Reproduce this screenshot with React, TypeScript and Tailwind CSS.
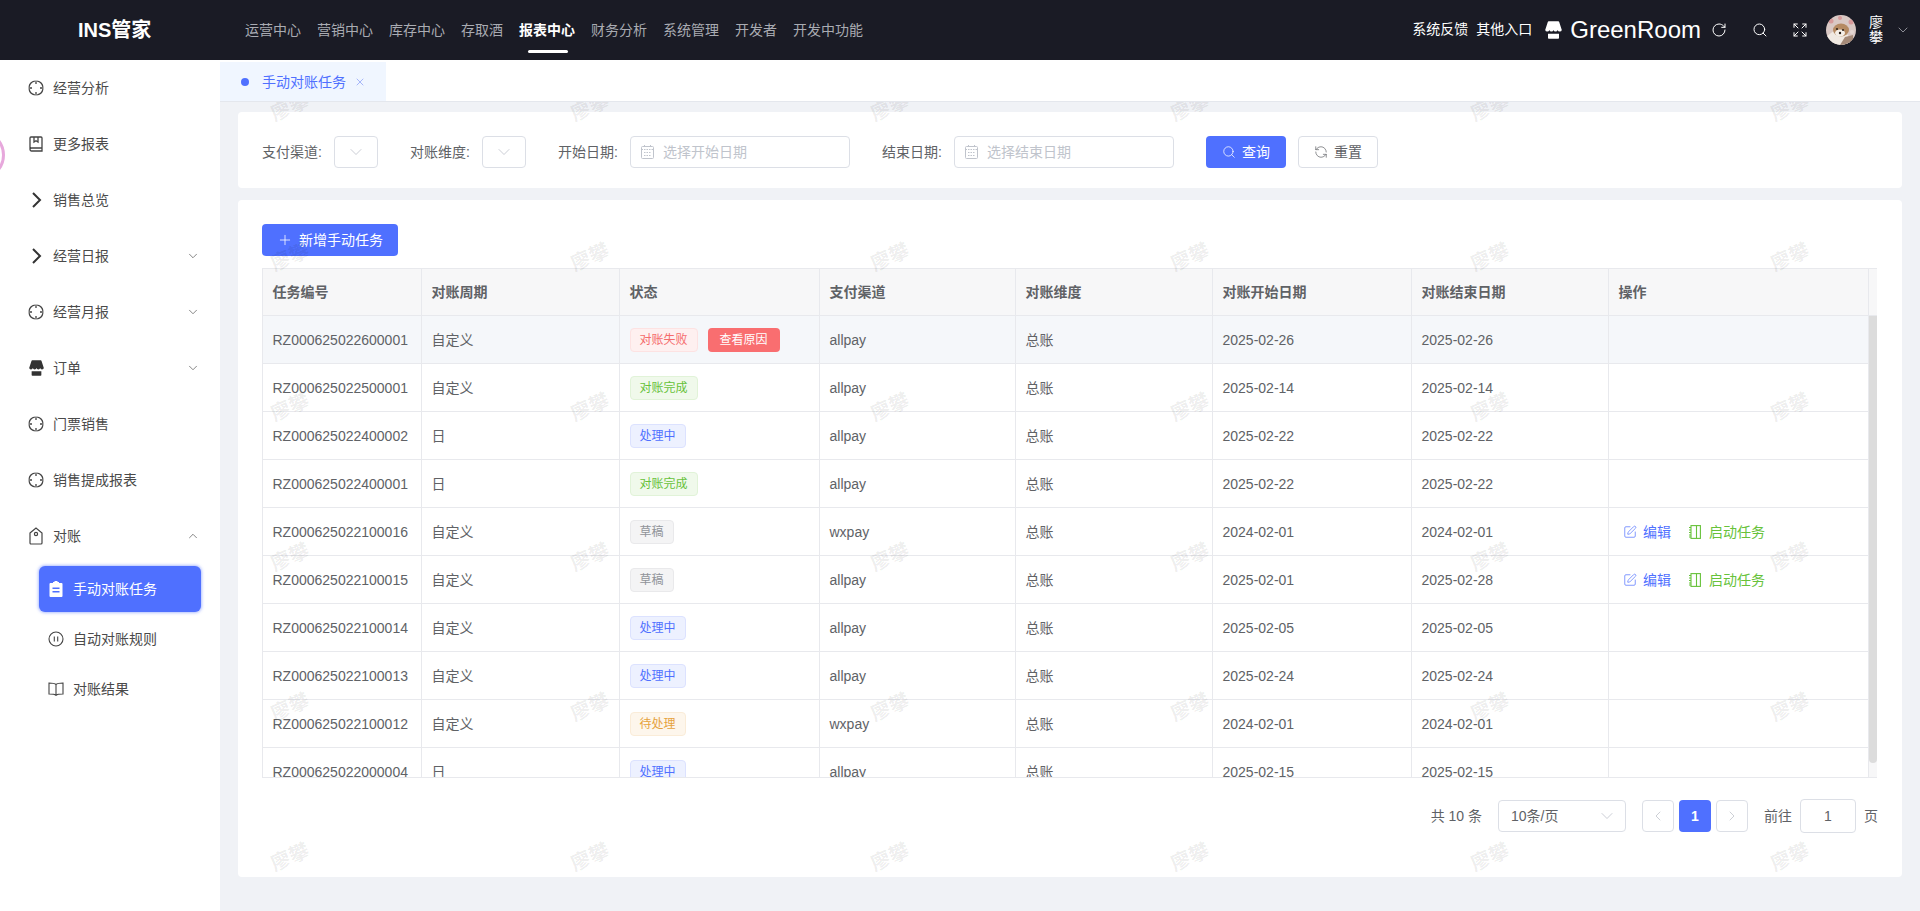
import { ChevronDown, ChevronLeft, ChevronRight, ChevronUp, Expand, Plus, RefreshCcw, RotateCw, Search, SquarePen, X } from "lucide-react";

const navItems = ["运营中心", "营销中心", "库存中心", "存取酒", "报表中心", "财务分析", "系统管理", "开发者", "开发中功能"];

const CrossCircle = () => (
  <svg width="16" height="16" viewBox="0 0 16 16" fill="none" stroke="#444" strokeWidth="1.300">
    <path d="M6.800 1.100A7 7 0 0 0 1.100 6.800M9.200 1.100a7 7 0 0 1 5.700 5.700M1.100 9.200a7 7 0 0 0 5.700 5.700M14.900 9.200a7 7 0 0 1-5.700 5.700" />
    <path d="M8 0.500v3.500M8 12v3.500M0.500 8H4M12 8h3.500" />
  </svg>
);

const BookMark = () => (
  <svg width="14" height="16" viewBox="0 0 14 16" fill="none" stroke="#444" strokeWidth="1.300">
    <path d="M1 13V2a1 1 0 0 1 1-1h10a1 1 0 0 1 1 1v13H2.500A1.500 1.500 0 0 1 1 13.500 1.500 1.500 0 0 1 2.500 12H13" />
    <path d="M5 1v5l2-1.300L9 6V1" />
  </svg>
);

const BigChevron = () => (
  <svg width="16" height="16" viewBox="0 0 16 16" fill="none" stroke="#333" strokeWidth="2">
    <path d="M5 1l7 7-7 7" />
  </svg>
);

const StoreShape = ({ color, size }: { color: string; size: number }) => (
  <svg width={size} height={size + 1} viewBox="0 0 17 18" fill={color}>
    <path d="M2.800 1Q3 .3 3.700 .3H13.300Q14 .3 14.200 1L16.800 9A2.100 1.900 0 0 1 12.650 9A2.100 1.900 0 0 1 8.500 9A2.100 1.900 0 0 1 4.350 9A2.100 1.900 0 0 1 .2 9z" />
    <path d="M3 12.800h11V17a.8.8 0 0 1-.8.8H3.800A.8.8 0 0 1 3 17z" />
  </svg>
);

const TagIcon = () => (
  <svg width="14" height="18" viewBox="0 0 14 18" fill="none" stroke="#444" strokeWidth="1.200">
    <path d="M1 6l6-5 6 5v10a1 1 0 0 1-1 1H2a1 1 0 0 1-1-1z" />
    <circle cx="7" cy="7" r="1.600" />
  </svg>
);

const PauseCircle = () => (
  <svg width="16" height="16" viewBox="0 0 16 16" fill="none" stroke="#444" strokeWidth="1.100">
    <circle cx="8" cy="8" r="7" />
    <path d="M6.300 5.500v5M9.700 5.500v5" />
  </svg>
);

const OpenBook = () => (
  <svg width="16" height="14" viewBox="0 0 16 14" fill="none" stroke="#444" strokeWidth="1.100">
    <path d="M8 2.500C7 1.500 5 1 1 1v11c4 0 6 .3 7 1.300 1-1 3-1.300 7-1.300V1c-4 0-6 .5-7 1.500zM8 2.500v10.800" />
  </svg>
);

const ClipboardFill = () => (
  <svg width="14" height="16" viewBox="0 0 14 16">
    <path fill="#fff" d="M1.500 2H4V1h1.500V0h3v1H10v1h2.500a1 1 0 0 1 1 1v12a1 1 0 0 1-1 1h-11a1 1 0 0 1-1-1V3a1 1 0 0 1 1-1z" />
    <path fill="#4f70ff" d="M3.500 6.500h7v1.400h-7zM3.500 10h7v1.400h-7z" />
  </svg>
);

const NotebookIcon = () => (
  <svg width="12" height="14" viewBox="0 0 12 14" fill="none" stroke="#67c23a" strokeWidth="1.100">
    <rect x="2" y="0.600" width="9.400" height="12.800" />
    <path d="M7.500 .6v12.800M0 2.500h2M0 5h2M0 7.500h2M0 10h2M0 12h2" />
  </svg>
);

const Avatar = () => (
  <svg width="30" height="30" viewBox="0 0 30 30" className="rounded-full">
    <rect width="30" height="30" fill="#d9c8c4" />
    <circle cx="5" cy="6" r="2.500" fill="#d79a9a" />
    <circle cx="14" cy="3" r="2" fill="#d79a9a" />
    <circle cx="25" cy="7" r="2.500" fill="#d79a9a" />
    <circle cx="26" cy="17" r="2" fill="#e4d6d2" />
    <path d="M0 22l10-8 12 6 3 10H0z" fill="#f0e9e2" />
    <ellipse cx="15" cy="15" rx="8" ry="6.500" fill="#b58a62" />
    <ellipse cx="14" cy="18" rx="5" ry="3.500" fill="#f5efe8" />
    <circle cx="11" cy="14" r="1" fill="#2b2118" />
    <circle cx="17" cy="15" r="1" fill="#2b2118" />
    <circle cx="14" cy="18" r="1.200" fill="#2b2118" />
    <path d="M19 22l8-2v10H14z" fill="#a58a78" />
  </svg>
);

const sideItems = [
  { label: "经营分析", icon: <CrossCircle /> },
  { label: "更多报表", icon: <BookMark /> },
  { label: "销售总览", icon: <BigChevron /> },
  { label: "经营日报", icon: <BigChevron />, arrow: "down" },
  { label: "经营月报", icon: <CrossCircle />, arrow: "down" },
  { label: "订单", icon: <StoreShape color="#333" size={15} />, arrow: "down" },
  { label: "门票销售", icon: <CrossCircle /> },
  { label: "销售提成报表", icon: <CrossCircle /> },
  { label: "对账", icon: <TagIcon />, arrow: "up" },
];

const tagStyles: Record<string, string> = {
  对账失败: "bg-[#fef0f0] border-[#fde2e2] text-[#f56c6c]",
  对账完成: "bg-[#f0f9eb] border-[#e1f3d8] text-[#67c23a]",
  处理中: "bg-[#edf1ff] border-[#dce2ff] text-[#4f70ff]",
  草稿: "bg-[#f4f4f5] border-[#e9e9eb] text-[#909399]",
  待处理: "bg-[#fdf6ec] border-[#faecd8] text-[#e6a23c]",
};

const rows = [
  ["RZ000625022600001", "自定义", "对账失败", "allpay", "总账", "2025-02-26", "2025-02-26"],
  ["RZ000625022500001", "自定义", "对账完成", "allpay", "总账", "2025-02-14", "2025-02-14"],
  ["RZ000625022400002", "日", "处理中", "allpay", "总账", "2025-02-22", "2025-02-22"],
  ["RZ000625022400001", "日", "对账完成", "allpay", "总账", "2025-02-22", "2025-02-22"],
  ["RZ000625022100016", "自定义", "草稿", "wxpay", "总账", "2024-02-01", "2024-02-01"],
  ["RZ000625022100015", "自定义", "草稿", "allpay", "总账", "2025-02-01", "2025-02-28"],
  ["RZ000625022100014", "自定义", "处理中", "allpay", "总账", "2025-02-05", "2025-02-05"],
  ["RZ000625022100013", "自定义", "处理中", "allpay", "总账", "2025-02-24", "2025-02-24"],
  ["RZ000625022100012", "自定义", "待处理", "wxpay", "总账", "2024-02-01", "2024-02-01"],
  ["RZ000625022000004", "日", "处理中", "allpay", "总账", "2025-02-15", "2025-02-15"],
];

const columns = [
  { title: "任务编号", width: "w-[159px]" },
  { title: "对账周期", width: "w-[198px]" },
  { title: "状态", width: "w-[200px]" },
  { title: "支付渠道", width: "w-[196px]" },
  { title: "对账维度", width: "w-[197px]" },
  { title: "对账开始日期", width: "w-[199px]" },
  { title: "对账结束日期", width: "w-[197px]" },
  { title: "操作", width: "w-[260px]" },
];

const SelectBox = () => (
  <div className="w-11 h-8 bg-white border border-[#dcdfe6] rounded flex items-center justify-center">
    <ChevronDown className="w-5 h-5 text-[#c0c4cc]" strokeWidth={1} />
  </div>
);

const DateBox = ({ placeholder }: { placeholder: string }) => (
  <div className="w-[220px] h-8 bg-white border border-[#dcdfe6] rounded flex items-center pl-[10px] gap-[9px]">
    <svg width="13" height="14" viewBox="0 0 13 14" fill="none" stroke="#c0c4cc" strokeWidth="1">
      <rect x="0.500" y="1.500" width="12" height="12" rx="1" />
      <path d="M0.500 4.500h12M3.500 0v2.500M9.500 0v2.500M3 7.500h7M3 10.500h7" strokeDasharray="1.500 1" />
    </svg>
    <span className="text-sm text-[#c0c4cc]">{placeholder}</span>
  </div>
);

const Field = ({ label, children }: { label: string; children: React.ReactNode }) => (
  <div className="flex items-center gap-3">
    <span className="w-[60px] text-sm text-[#606266] whitespace-nowrap">{label}</span>
    {children}
  </div>
);

export default function App() {
  return (
    <div className="relative w-[1920px] h-[911px] overflow-hidden flex flex-col bg-[#f0f2f6] font-['Liberation_Sans','Noto_Sans_CJK_SC',sans-serif]">
      {/* top bar */}
      <header className="h-[60px] shrink-0 bg-[#1a1b25] flex items-center text-white">
        <div className="w-[245px] pl-[78px] text-xl font-bold">INS管家</div>
        <nav className="flex items-center gap-4 h-full">
          {navItems.map((item) => (
            <div key={item} className={`relative text-sm ${item === "报表中心" ? "text-white font-bold" : "text-[#a9abb2]"}`}>
              {item}
              {item === "报表中心" && <div className="absolute left-[9px] top-[30px] w-10 h-[3px] rounded-sm bg-white" />}
            </div>
          ))}
        </nav>
        <div className="ml-auto flex items-center h-full text-white">
          <span className="text-sm mr-2 -mt-[2px]">系统反馈</span>
          <span className="text-sm mr-[13px] -mt-[2px]">其他入口</span>
          <StoreShape color="#fff" size={17} />
          <span className="text-2xl ml-2 mr-[10px]">GreenRoom</span>
          <RotateCw className="w-4 h-4 mr-[25px]" strokeWidth={1.500} />
          <Search className="w-4 h-4 mr-[24px]" strokeWidth={1.500} />
          <Expand className="w-4 h-4 mr-[18px]" strokeWidth={1.500} />
          <Avatar />
          <span className="w-[14px] ml-[13px] text-sm leading-[15px]">廖攀</span>
          <ChevronDown className="w-4 h-4 ml-[12px] mr-[9px] text-[#a9abb2]" strokeWidth={1.200} />
        </div>
      </header>

      <div className="flex flex-1 min-h-0">
        {/* sidebar */}
        <aside className="relative w-[220px] shrink-0 bg-white overflow-hidden">
          <div className="absolute -left-[45px] top-[70px] w-[50px] h-[50px] rounded-full border-[3px] border-[#e7a8dc]" />
          {sideItems.map((item) => (
            <div key={item.label} className="h-14 flex items-center pl-7 pr-5">
              <span className="w-4 flex justify-center">{item.icon}</span>
              <span className="ml-[9px] text-sm text-[#4a4a4a]">{item.label}</span>
              {item.arrow === "down" && <ChevronDown className="ml-auto w-[14px] h-[14px] text-[#555]" strokeWidth={1.200} />}
              {item.arrow === "up" && <ChevronUp className="ml-auto w-[14px] h-[14px] text-[#555]" strokeWidth={1.200} />}
            </div>
          ))}
          <div className="h-[50px] pl-[39px] flex items-center">
            <div className="w-[162px] h-[46px] rounded-md bg-[#4f70ff] shadow-[0_0_3px_1px_rgba(79,112,255,0.45)] flex items-center pl-[10px] gap-[10px] text-sm text-white">
              <ClipboardFill />
              手动对账任务
            </div>
          </div>
          <div className="h-[50px] pl-[48px] flex items-center gap-[9px] text-sm text-[#4a4a4a]">
            <PauseCircle />
            自动对账规则
          </div>
          <div className="h-[50px] pl-[48px] flex items-center gap-[9px] text-sm text-[#4a4a4a]">
            <OpenBook />
            对账结果
          </div>
        </aside>

        <main className="flex-1 min-w-0 flex flex-col">
          {/* tab strip */}
          <div className="h-[42px] shrink-0 bg-white border-b border-[#e4e7ed] pt-[2px]">
            <div className="w-[166px] h-[39px] bg-[#f0f6ff] flex items-center pl-[21px] text-sm text-[#4f70ff]">
              <span className="w-2 h-2 rounded-full bg-[#4f70ff]" />
              <span className="ml-[13px]">手动对账任务</span>
              <X className="w-3 h-3 ml-2 text-[#7d93f5]" strokeWidth={1.300} />
            </div>
          </div>

          <div className="pt-[10px] pl-[18px] pr-[18px] flex flex-col gap-3">
            {/* filters */}
            <div className="h-[76px] bg-white rounded-sm pl-6 pt-6 flex items-start gap-8">
              <Field label="支付渠道:">
                <SelectBox />
              </Field>
              <Field label="对账维度:">
                <SelectBox />
              </Field>
              <Field label="开始日期:">
                <DateBox placeholder="选择开始日期" />
              </Field>
              <Field label="结束日期:">
                <DateBox placeholder="选择结束日期" />
              </Field>
              <div className="flex gap-3">
                <button className="w-20 h-8 rounded-sm bg-[#4f70ff] text-white text-sm flex items-center justify-center gap-[6px]">
                  <Search className="w-[14px] h-[14px]" strokeWidth={1.300} />
                  查询
                </button>
                <button className="w-20 h-8 rounded-sm bg-white border border-[#dcdfe6] text-[#606266] text-sm flex items-center justify-center gap-[6px]">
                  <RefreshCcw className="w-[14px] h-[14px]" strokeWidth={1.200} />
                  重置
                </button>
              </div>
            </div>

            {/* table card */}
            <div className="h-[677px] bg-white rounded-sm pt-6 pl-6 pr-6">
              <button className="w-[136px] h-8 rounded-sm bg-[#4f70ff] text-white text-sm flex items-center justify-center gap-[6px]">
                <Plus className="w-4 h-4" strokeWidth={1.200} />
                新增手动任务
              </button>

              <div className="mt-3 w-[1615px] h-[510px] flex border-t border-l border-b border-[#e8e9ed] overflow-hidden">
                <table className="w-[1606px] shrink-0 table-fixed border-separate border-spacing-0 h-fit">
                  <colgroup>
                    {columns.map((c) => (
                      <col key={c.title} className={c.width} />
                    ))}
                  </colgroup>
                  <thead>
                    <tr>
                      {columns.map((c) => (
                        <th key={c.title} className="h-[47px] px-[9.5px] text-left text-sm font-bold text-[#606266] bg-[#f7f7f8] border-r border-b border-[#e8e9ed]">
                          {c.title}
                        </th>
                      ))}
                    </tr>
                  </thead>
                  <tbody>
                    {rows.map((row, i) => (
                      <tr key={row[0]} className={i === 0 ? "bg-[#f5f7fa]" : ""}>
                        {row.map((cell, j) => (
                          <td key={j} className="h-12 px-[9.5px] text-sm text-[#606266] border-r border-b border-[#e8e9ed] whitespace-nowrap">
                            {j === 2 ? (
                              <div className="flex items-center gap-[10px]">
                                <span className={`h-6 px-[9px] border rounded text-xs leading-[22px] ${tagStyles[cell]}`}>{cell}</span>
                                {cell === "对账失败" && (
                                  <button className="w-[72px] h-6 rounded-sm bg-[#f96e70] text-white text-xs">查看原因</button>
                                )}
                              </div>
                            ) : (
                              cell
                            )}
                          </td>
                        ))}
                        <td className="h-12 px-[10px] text-sm border-r border-b border-[#e8e9ed]">
                          {(i === 4 || i === 5) && (
                            <div className="flex items-center ml-1">
                              <SquarePen className="w-[14px] h-[14px] text-[#4f70ff]" strokeWidth={1.200} />
                              <span className="ml-[6px] text-[#4f70ff]">编辑</span>
                              <span className="ml-[18px]">
                                <NotebookIcon />
                              </span>
                              <span className="ml-2 text-[#67c23a]">启动任务</span>
                            </div>
                          )}
                        </td>
                      </tr>
                    ))}
                  </tbody>
                </table>
                <div className="w-2 shrink-0 bg-[#f7f7f8] flex flex-col">
                  <div className="h-[47px] shrink-0 border-b border-[#e8e9ed]" />
                  <div className="h-[447px] bg-[#dcdcdc] rounded-b-sm" />
                </div>
              </div>

              {/* pagination */}
              <div className="mt-[21px] h-[34px] flex items-center justify-end text-sm text-[#606266]">
                <span>共 10 条</span>
                <div className="ml-4 w-32 h-8 border border-[#dcdfe6] rounded flex items-center justify-between pl-3 pr-2">
                  <span>10条/页</span>
                  <ChevronDown className="w-5 h-5 text-[#c0c4cc]" strokeWidth={1} />
                </div>
                <div className="ml-4 w-8 h-8 border border-[#dcdfe6] rounded flex items-center justify-center">
                  <ChevronLeft className="w-4 h-4 text-[#c0c4cc]" strokeWidth={1.200} />
                </div>
                <div className="ml-[5px] w-8 h-8 rounded bg-[#4f70ff] text-white font-bold flex items-center justify-center">1</div>
                <div className="ml-[5px] w-8 h-8 border border-[#dcdfe6] rounded flex items-center justify-center">
                  <ChevronRight className="w-4 h-4 text-[#c0c4cc]" strokeWidth={1.200} />
                </div>
                <span className="ml-4">前往</span>
                <div className="ml-2 w-14 h-[34px] border border-[#dcdfe6] rounded flex items-center justify-center">1</div>
                <span className="ml-2">页</span>
              </div>
            </div>
          </div>
        </main>
      </div>

      {/* watermark */}
      <div className="absolute left-[220px] top-[102px] right-0 bottom-0 overflow-hidden pointer-events-none">
        <div className="grid grid-cols-[repeat(6,300px)] auto-rows-[150px] -ml-[80px] -mt-[70px]">
          {Array.from({ length: 36 }).map((_, i) => (
            <span key={i} className="flex items-center justify-center text-[20px] font-bold text-black/[0.08] -rotate-[24deg]">
              廖攀
            </span>
          ))}
        </div>
      </div>
    </div>
  );
}
